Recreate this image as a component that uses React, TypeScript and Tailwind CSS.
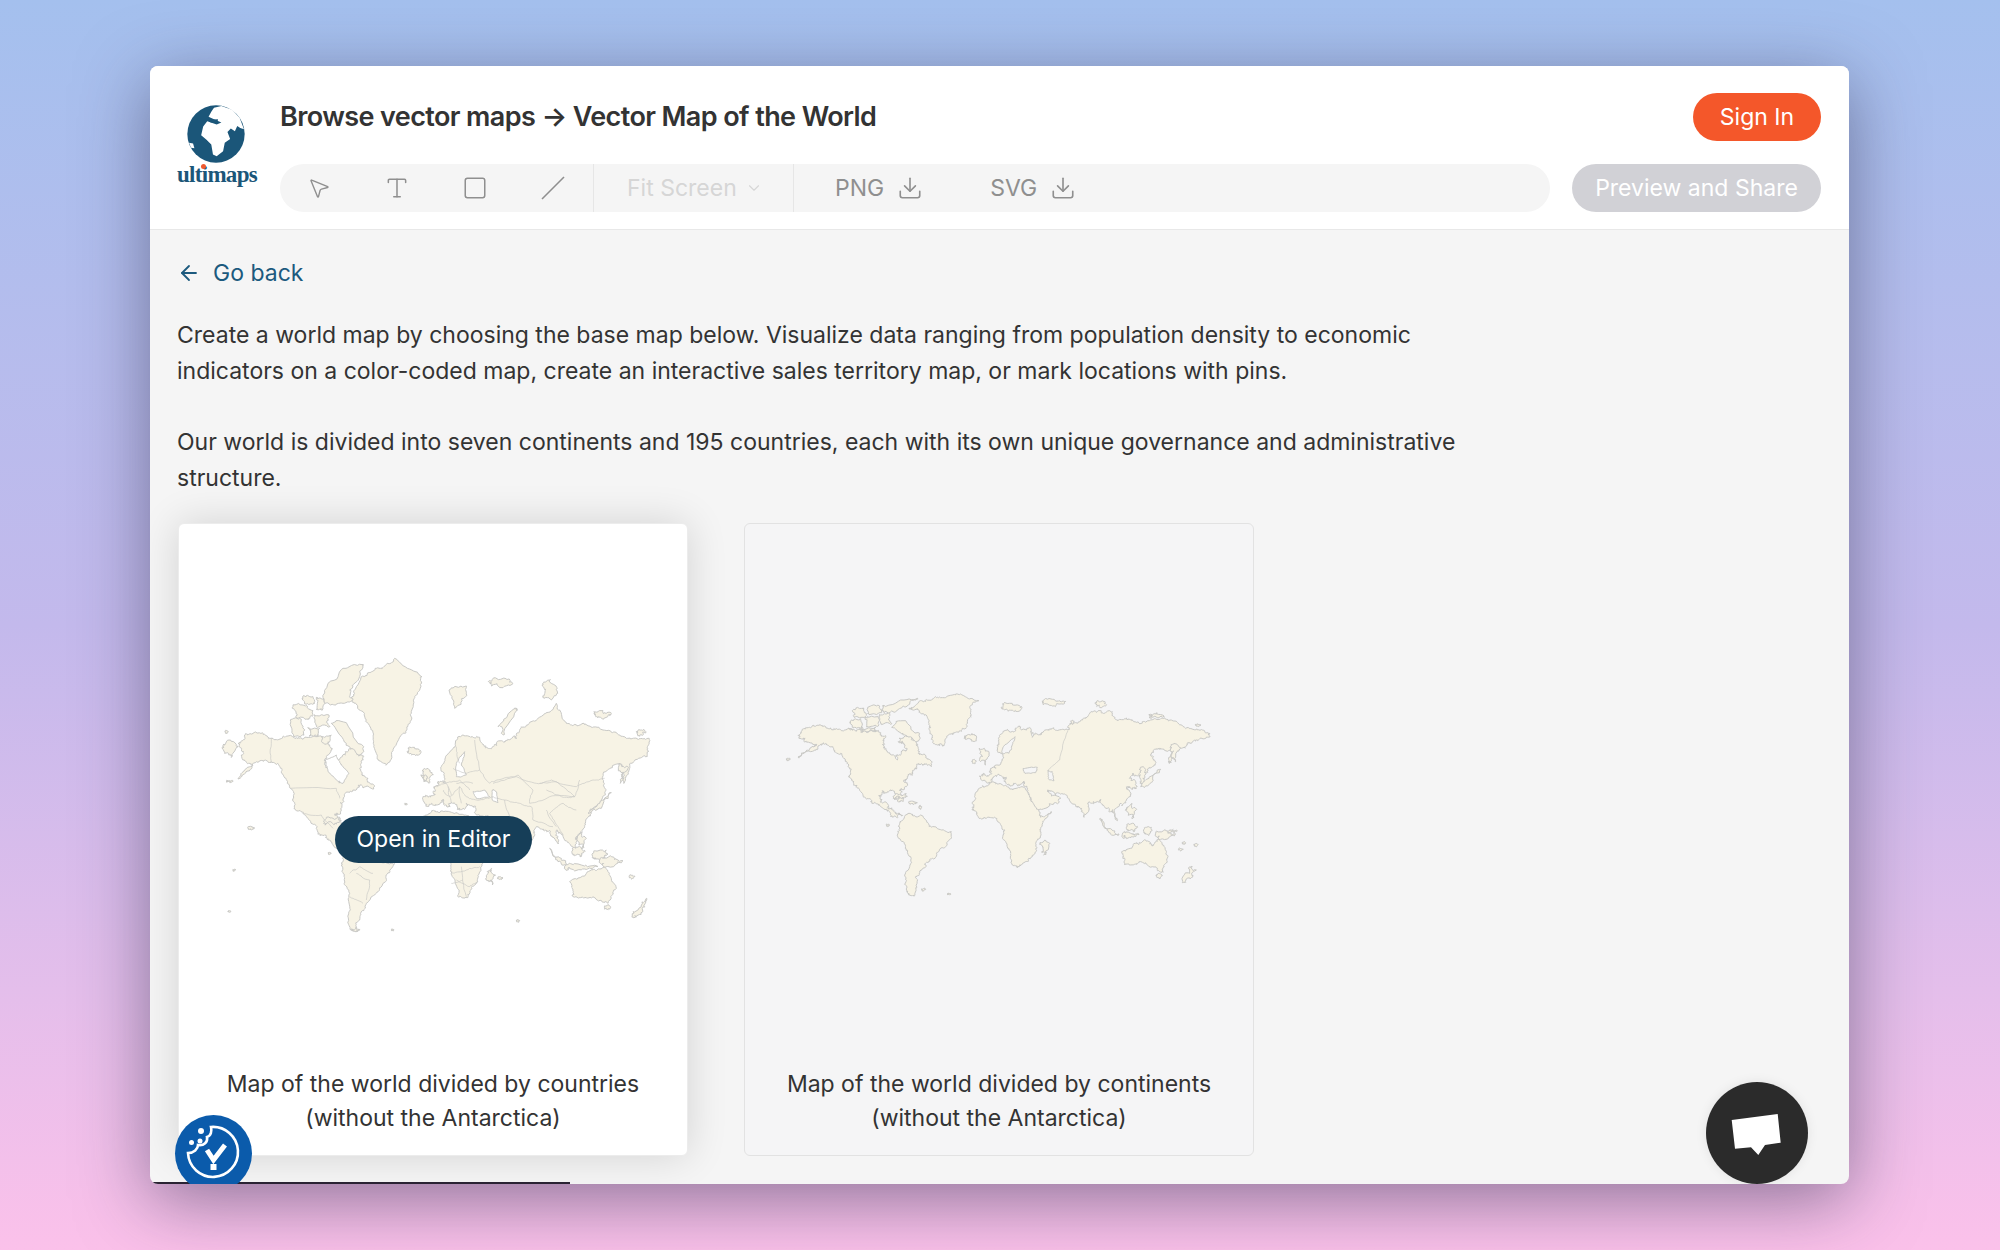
import { ArrowLeft, ChevronDown, Download, MousePointer2, Square, Type } from 'lucide-react'

type Pt = [number, number]

// split the edges a few times so the hand placed outlines read like coastlines
function coast(points: Pt[], seed: number, amp = 5, rounds = 3, closed = true) {
  let s = seed
  const rnd = () => {
    s = (s * 16807) % 2147483647
    return s / 2147483647 - 0.5
  }
  let pts = points
  let a = amp
  for (let r = 0; r < rounds; r++) {
    const next: Pt[] = []
    const n = closed ? pts.length : pts.length - 1
    for (let i = 0; i < n; i++) {
      const p = pts[i]
      const q = pts[(i + 1) % pts.length]
      next.push(p)
      next.push([(p[0] + q[0]) / 2 + rnd() * a, (p[1] + q[1]) / 2 + rnd() * a])
    }
    if (!closed) next.push(pts[pts.length - 1])
    pts = next
    a *= 0.65
  }
  const d = pts.map((p, i) => `${i ? 'L' : 'M'}${p[0].toFixed(1)} ${p[1].toFixed(1)}`).join(' ')
  return closed ? d + ' Z' : d
}

function box(x: number, y: number, w: number, h: number): Pt[] {
  return [[x, y + h * 0.3], [x + w * 0.5, y], [x + w, y + h * 0.4], [x + w * 0.6, y + h], [x + w * 0.1, y + h * 0.8]]
}

// bigger islands get rougher edges than the little specks
function roughness(p: Pt[]) {
  const xs = p.map((q) => q[0])
  const ys = p.map((q) => q[1])
  const size = Math.max(Math.max(...xs) - Math.min(...xs), Math.max(...ys) - Math.min(...ys))
  return Math.max(3, Math.min(16, size * 0.35))
}

const LAND = '#f7f3e5'
const LINE = '#c9c9c6'

const worldContinents: Pt[][] = [
  // north america
  [[92,205],[100,180],[130,167],[170,170],[205,178],[240,176],[262,184],[300,185],[335,188],[350,200],[343,222],[352,242],[385,270],[397,250],[410,235],[398,215],[390,205],[420,195],[440,215],[452,245],[470,262],[487,290],[460,285],[440,295],[425,315],[410,330],[412,350],[395,362],[388,378],[402,395],[385,385],[365,362],[340,362],[330,375],[337,395],[355,412],[375,425],[398,437],[385,441],[365,430],[335,410],[305,395],[280,370],[255,345],[240,320],[240,285],[215,250],[190,230],[155,225],[125,245],[88,263],[120,240],[140,225],[105,215]],
  // greenland
  [[420,115],[450,95],[500,80],[560,72],[628,90],[607,105],[605,140],[580,175],[550,190],[520,228],[505,225],[490,195],[480,160],[455,130]],
  // eurasia
  [[640,332],[638,315],[665,312],[665,295],[682,285],[703,262],[685,240],[690,215],[715,180],[750,168],[785,175],[790,202],[815,195],[850,175],[895,180],[905,160],[950,145],[985,125],[1030,125],[1045,150],[1090,150],[1120,155],[1180,145],[1250,175],[1300,180],[1322,198],[1280,210],[1255,225],[1225,230],[1205,278],[1200,275],[1205,240],[1170,235],[1145,255],[1160,280],[1135,305],[1100,315],[1083,320],[1100,335],[1090,355],[1075,350],[1085,375],[1060,405],[1035,420],[1045,452],[1030,420],[1010,415],[995,390],[960,395],[945,442],[925,410],[895,380],[860,375],[835,360],[875,385],[845,402],[805,422],[785,385],[772,350],[765,335],[740,340],[720,345],[712,322],[690,315],[665,330]],
  // africa
  [[612,395],[640,350],[680,338],[720,352],[770,355],[790,395],[815,442],[847,425],[815,475],[800,520],[790,560],[755,588],[730,585],[715,530],[705,490],[680,445],[630,445],[610,420]],
  // south america
  [[390,470],[420,430],[455,435],[490,470],[547,485],[530,530],[490,565],[470,590],[440,620],[437,677],[415,665],[408,620],[425,560],[395,510]],
  // australia
  [[1058,545],[1100,520],[1130,510],[1150,528],[1170,505],[1197,560],[1180,603],[1150,590],[1110,575],[1068,585]],
]

const worldIslands: Pt[][] = [
  // arctic canada
  [[340,108],[395,90],[445,85],[418,105],[380,125],[345,128]],
  [[368,172],[410,152],[452,190],[440,215],[402,190]],
  [[250,122],[285,116],[290,138],[255,142]], [[296,112],[332,108],[338,128],[300,134]], [[245,152],[275,148],[280,172],[250,172]],
  [[288,142],[325,140],[328,168],[292,170]], [[332,135],[362,130],[368,160],[335,162]], [[272,175],[320,172],[322,184],[275,186]],
  // the rest
  box(585,195,38,16), box(702,100,55,25), box(820,88,70,16), box(980,95,30,18), box(1140,132,45,12),
  box(1280,162,15,7), box(52,265,12,6), box(815,510,25,45), box(1162,610,18,16), [[1240,638],[1262,610],[1270,590],[1282,600],[1265,625]],
  box(632,235,28,50), box(610,268,12,14), box(1115,290,15,55), [[1115,350],[1140,325],[1175,298],[1150,335]], box(1205,220,25,55),
  box(1075,400,28,45), [[995,445],[1030,480],[1050,495],[1025,490],[1000,465]], box(1060,490,50,10), box(1075,460,30,25), box(1125,470,25,25),
  box(1160,482,60,25), box(1200,478,25,12), box(1240,515,10,8), box(1275,520,12,10), box(1230,535,12,6),
  box(375,375,40,10), box(420,395,25,8), box(352,462,10,7), box(458,656,12,6), box(535,670,10,5),
  box(905,150,10,12), box(450,405,8,12),
]

const worldHoles: Pt[][] = [
  [[702,232],[738,200],[730,225],[720,250],[700,250]],
  [[762,296],[805,292],[800,308],[768,310]],
  [[838,300],[850,305],[855,332],[838,326]],
]

const countriesLand: Pt[][] = [
  // north america
  [[110,320],[125,290],[150,280],[205,295],[255,288],[300,298],[345,290],[375,300],[387,330],[365,360],[375,385],[410,428],[425,395],[410,355],[430,335],[460,330],[480,352],[470,385],[492,415],[512,447],[475,435],[445,455],[420,480],[415,510],[395,525],[412,545],[402,590],[425,640],[400,625],[370,590],[340,565],[300,520],[275,490],[262,445],[235,395],[205,365],[160,365],[105,417],[150,375],[115,345]],
  // greenland
  [[445,180],[475,110],[520,85],[575,55],[657,110],[635,170],[625,240],[600,280],[550,375],[520,340],[505,270],[480,215]],
  // eurasia
  [[668,498],[668,470],[695,465],[693,440],[705,425],[725,425],[715,380],[745,330],[780,285],[830,292],[850,322],[880,315],[905,305],[940,295],[955,262],[1000,240],[1060,190],[1092,250],[1140,250],[1200,270],[1270,295],[1335,295],[1332,350],[1282,370],[1262,430],[1250,372],[1200,400],[1207,465],[1160,512],[1145,560],[1120,590],[1118,625],[1080,590],[1060,572],[1066,612],[1040,572],[1000,560],[985,610],[960,560],[955,575],[900,610],[870,540],[820,525],[810,500],[790,490],[770,510],[755,490],[735,500],[720,480],[700,495]],
  // africa
  [[660,540],[690,512],[740,515],[800,530],[840,590],[880,610],[840,670],[820,730],[795,770],[765,770],[745,700],[740,660],[670,640]],
  // south america
  [[420,650],[470,620],[500,650],[575,672],[540,730],[490,790],[470,840],[462,875],[435,850],[440,760],[420,700]],
  // australia
  [[1100,725],[1165,690],[1205,680],[1240,745],[1215,790],[1170,770],[1110,770]],
]

const countriesIslands: Pt[][] = [
  // arctic canada
  [[360,190],[375,130],[420,85],[482,75],[470,110],[440,150],[450,180],[400,192]],
  [[385,250],[430,248],[482,320],[465,345],[430,310]],
  [[268,205],[300,195],[330,212],[320,235],[280,235]], [[262,240],[295,238],[302,285],[272,290]],
  [[300,168],[330,170],[335,190],[305,192]], [[340,172],[362,178],[358,210],[340,208]], [[335,225],[378,225],[380,258],[340,260]],
  [[315,262],[350,265],[345,290],[318,288]], [[355,290],[385,285],[380,305],[358,308]],
  // the rest
  box(617,322,35,25), [[738,150],[790,138],[780,175],[755,205]], box(858,118,70,25), box(1018,120,45,60), box(1175,212,50,22), box(1300,270,30,15),
  [[885,260],[935,205],[942,210],[900,285]], box(60,300,45,50), box(66,272,10,8), box(70,422,20,6), box(660,385,30,45), box(662,405,12,18),
  [[1248,370],[1260,400],[1252,430],[1275,385]], [[1155,520],[1190,490],[1225,458],[1195,505]], box(1125,575,25,50),
  [[1040,625],[1075,655],[1095,675],[1065,665]], box(1085,675,100,12), box(1110,620,35,30), box(1170,630,45,30), box(1190,650,70,30),
  box(855,685,22,50), box(1205,795,18,14), [[1288,825],[1315,795],[1330,775],[1325,800],[1300,828]], box(1280,705,15,10),
  box(365,535,50,18), box(135,560,20,10), box(375,637,10,6), box(90,688,8,5), box(75,812,8,5), box(445,865,25,8),
  box(940,838,10,8), box(565,868,8,5), box(605,490,8,5), box(885,710,15,8),
]

// white holes: hudson bay, baltic, black sea, caspian
const countriesHoles: Pt[][] = [
  [[367,360],[400,345],[415,375],[438,400],[420,430],[400,420],[375,395]],
  [[760,370],[785,335],[775,375],[790,405],[760,410]],
  [[810,455],[845,450],[860,470],[820,475]],
  [[868,450],[880,455],[885,488],[868,480]],
]

const countryBorders: Pt[][] = [
  [[205,295],[205,365]], [[262,445],[400,445],[410,475]], [[300,520],[355,525],[390,565]],
  [[725,430],[770,420],[800,450]], [[750,385],[790,400],[830,390],[815,300]], [[830,390],[860,430],[880,420],[940,410],[1000,430],[1045,420],[1120,440],[1170,420],[1205,415]],
  [[870,430],[945,405],[990,450],[980,490],[1040,470],[1115,470],[1130,420]], [[1010,430],[1060,425],[1115,470],[1075,470],[1030,450]],
  [[870,470],[905,480],[950,490],[985,500],[990,540],[1050,560]], [[905,480],[920,530],[955,545]], [[1040,520],[1065,560],[1080,585]],
  [[720,450],[740,470],[770,440],[790,470]], [[700,440],[730,430],[745,465]], [[760,320],[770,370]], [[810,430],[760,430]],
  [[1120,510],[1080,490],[1040,520]], [[1030,510],[1060,560]], [[735,440],[745,490]], [[770,440],[775,490]], [[790,470],[830,480],[870,470]],
  [[745,700],[790,690],[830,680]], [[760,720],[800,740],[820,730]], [[775,680],[790,770]], [[745,730],[780,720]],
  [[460,700],[500,720],[490,780]], [[440,700],[470,680],[510,700]], [[440,770],[480,790]],
]

const worldBorders: Pt[][] = [
  [[897,182],[872,270],[838,300]],
]

function Map({ w, h, land, islands, holes = [], borders = [], bg }: { w: number; h: number; land: Pt[][]; islands: Pt[][]; holes?: Pt[][]; borders?: Pt[][]; bg: string }) {
  return (
    <svg width={w / 3} height={h / 3} viewBox={`0 0 ${w} ${h}`}>
      <g fill={LAND} stroke={LINE} strokeWidth="3" strokeLinejoin="round">
        {land.map((p, i) => <path key={i} d={coast(p, 97 + i * 131, 16, 4)} />)}
        {islands.map((p, i) => <path key={i} d={coast(p, 311 + i * 77, roughness(p), 3)} />)}
        {holes.map((p, i) => <path key={i} fill={bg} d={coast(p, 501 + i * 41, 6, 3)} />)}
      </g>
      <g fill="none" stroke={LINE} strokeWidth="2">
        {borders.map((p, i) => <path key={i} d={coast(p, 733 + i * 59, 7, 3, false)} />)}
      </g>
    </svg>
  )
}

function Logo() {
  return (
    <div className="flex flex-col items-center w-[80px] shrink-0 pt-[12px]">
      <svg width="58" height="58" viewBox="48 28 172 172" className="-ml-[3px]">
        <circle cx="134" cy="114" r="85" fill="#1b5679" />
        <path fill="#fff" d="M112 63 L120 48 L128 36 L150 31 L182 42 L204 66 L217 100 L206 96 L197 90 L190 106 L178 98 L168 108 L176 129 L160 140 L155 165 L136 180 L125 175 L120 145 L105 130 L90 118 L96 92 L108 76 L136 86 L150 80 L128 70 Z" />
        <path fill="#fff" d="M54 140 L66 142 L70 156 L60 155 Z" />
        <path fill="#1b5679" d="M114 72 L140 70 L138 80 L118 80 Z" />
      </svg>
      <div className="relative font-['Liberation_Serif',serif] font-bold text-[23px] leading-[24px] tracking-[-0.7px] text-[#1b5679]">
        ultimaps
        <span className="absolute left-[24px] top-[1px] w-[5px] h-[5px] rounded-full bg-[#ee5a30]"></span>
      </div>
    </div>
  )
}

function Toolbar() {
  return (
    <div className="flex-1 h-[48px] rounded-full bg-[#f5f5f5] flex items-center text-[#8f8f8f]">
      <div className="flex items-center w-[314px] shrink-0 h-full border-r border-[#e6e6e6]">
        <span className="w-[78px] flex justify-center"><MousePointer2 className="w-[24px] h-[24px]" strokeWidth={1.4} /></span>
        <span className="w-[78px] flex justify-center"><Type className="w-[26px] h-[26px]" strokeWidth={1.4} /></span>
        <span className="w-[78px] flex justify-center"><Square className="w-[26px] h-[26px]" strokeWidth={1.4} /></span>
        <span className="w-[78px] flex justify-center">
          <svg width="26" height="26" viewBox="0 0 26 26"><path d="M2 24 L24 2" stroke="currentColor" strokeWidth="1.6" /></svg>
        </span>
      </div>
      <div className="flex items-center gap-[8px] w-[200px] shrink-0 h-full border-r border-[#e6e6e6] pl-[33px] text-[#d6d6d6] text-[23px]">
        Fit Screen
        <ChevronDown className="w-[18px] h-[18px]" strokeWidth={1.5} />
      </div>
      <div className="flex items-center gap-[13px] ml-[41px] text-[23px]">
        PNG
        <Download className="w-[26px] h-[26px]" strokeWidth={1.5} />
      </div>
      <div className="flex items-center gap-[13px] ml-[67px] text-[23px]">
        SVG
        <Download className="w-[26px] h-[26px]" strokeWidth={1.5} />
      </div>
    </div>
  )
}

export default function App() {
  return (
    <div className="h-[1250px] w-full overflow-hidden bg-gradient-to-b from-[#a4c0ee] via-[#c3b9ec] to-[#fbc1ea] pt-[66px] pl-[150px] font-['Inter',sans-serif]">
      <div className="relative w-[1699px] h-[1118px] rounded-[8px] bg-[#f5f5f5] overflow-hidden shadow-[0_16px_70px_rgba(40,40,70,0.5)] flex flex-col">
        <header className="h-[164px] shrink-0 bg-white border-b border-[#e8e8e8] flex pl-[27px] pr-[28px] pt-[27px] gap-[23px]">
          <Logo />
          <div className="flex-1 flex flex-col gap-[23px]">
            <div className="flex items-center justify-between h-[48px]">
              <h1 className="text-[27px] font-semibold tracking-[-0.6px] text-[#333333] pt-[1px]">Browse vector maps → Vector Map of the World</h1>
              <button className="w-[128px] h-[48px] rounded-full bg-[#f4572a] text-white text-[23px]">Sign In</button>
            </div>
            <div className="flex items-center gap-[22px]">
              <Toolbar />
              <button className="w-[249px] h-[48px] rounded-full bg-[#d1d1d6] text-white text-[23px] shrink-0">Preview and Share</button>
            </div>
          </div>
        </header>

        <main className="flex-1 overflow-hidden px-[28px] pt-[25px] text-[#333333]">
          <div className="flex items-center gap-[12px] h-[36px] text-[23px] text-[#1c5a7e]">
            <ArrowLeft className="w-[24px] h-[24px] -ml-[1px]" strokeWidth={1.8} />
            Go back
          </div>
          <div className="mt-[26px] w-[1300px] text-[23px] leading-[36px] -ml-[1px]">
            <p>Create a world map by choosing the base map below. Visualize data ranging from population density to economic indicators on a color-coded map, create an interactive sales territory map, or mark locations with pins.</p>
            <p className="mt-[35px]">Our world is divided into seven continents and 195 countries, each with its own unique governance and administrative structure.</p>
          </div>

          <div className="flex gap-[56px] mt-[27px]">
            <div className="relative w-[510px] h-[633px] bg-white rounded-[6px] border border-[#ececec] shadow-[0_0_40px_rgba(0,0,0,0.14)] flex flex-col items-center">
              <div className="mt-[116px] h-[300px]">
                <Map w={1380} h={900} land={countriesLand} islands={countriesIslands} holes={countriesHoles} borders={countryBorders} bg="#ffffff" />
              </div>
              <p className="mt-auto mb-[20px] text-center text-[23px] leading-[34px]">Map of the world divided by countries<br />(without the Antarctica)</p>
              <button className="absolute left-[156px] top-[292px] w-[197px] h-[47px] rounded-full bg-[#163e58] text-white text-[23px]">Open in Editor</button>
            </div>
            <div className="w-[510px] h-[633px] bg-[#f5f5f6] rounded-[6px] border border-[#e2e2e2] flex flex-col items-center">
              <div className="mt-[146px] h-[250px]">
                <Map w={1380} h={750} land={worldContinents} islands={worldIslands} holes={worldHoles} borders={worldBorders} bg="#f5f5f6" />
              </div>
              <p className="mt-auto mb-[20px] text-center text-[23px] leading-[34px]">Map of the world divided by continents<br />(without the Antarctica)</p>
            </div>
          </div>
        </main>

        <div className="absolute left-[3px] right-[1279px] bottom-0 h-[2px] bg-[#2a2333]"></div>

        {/* cookie consent */}
        <div className="absolute left-[25px] bottom-[-8px] w-[77px] h-[77px] rounded-full bg-[#0b5bab]">
          <svg width="77" height="77" viewBox="0 0 77 77" fill="none">
            <path d="M36 12 A25 25 0 1 1 13 38 C19 38 23 34 23 30 C29 31 33 27 32 22 C36 21 37 16 36 12 Z" stroke="#fff" strokeWidth="2.6" />
            <circle cx="26" cy="16" r="3" fill="#fff" />
            <circle cx="25" cy="26" r="2.5" fill="#fff" />
            <circle cx="16.5" cy="27.5" r="2.5" fill="#fff" />
            <path d="M32 35 L38.5 45 L50 30" stroke="#fff" strokeWidth="5" />
            <rect x="35.5" y="49" width="6" height="6" fill="#fff" />
          </svg>
        </div>

        {/* chat */}
        <div className="absolute right-[41px] bottom-0 w-[102px] h-[102px] rounded-full bg-[#2b2b2b] shadow-[0_0_12px_rgba(0,0,0,0.08)]">
          <svg width="102" height="102" viewBox="0 0 102 102">
            <polygon fill="#fff" points="25.7,38 71.7,32 74.7,60.7 59,63 52.3,73 45,65.3 29,66.7" />
          </svg>
        </div>
      </div>
    </div>
  )
}
